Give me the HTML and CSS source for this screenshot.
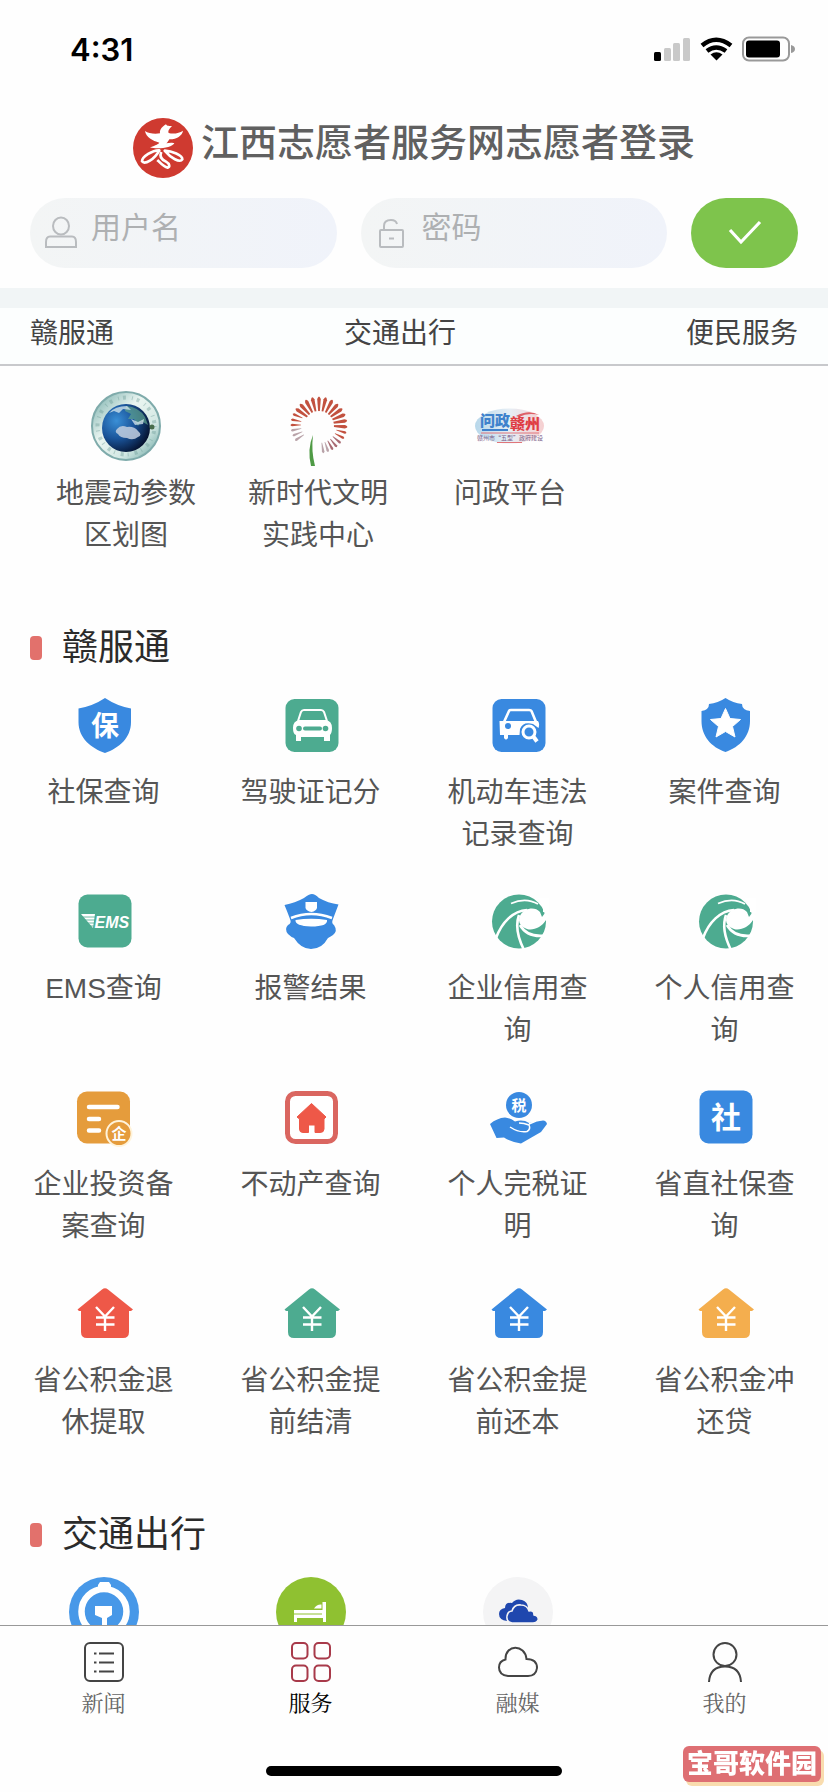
FILE: index.html
```html
<!DOCTYPE html>
<html lang="zh-CN">
<head>
<meta charset="utf-8">
<meta name="viewport" content="width=device-width, initial-scale=1">
<title>服务</title>
<link rel="stylesheet" href="styles.css">
</head>
<body>
<svg class="sprite" aria-hidden="true">
  <symbol id="house-yen" viewBox="0 0 70 70">
    <path fill="currentColor" d="M33 11.500Q36 9 39 11.500L64 31.500L62 33H60V54Q60 60 54 60H18Q12 60 12 54V33H10L8.500 31.500Z"/>
    <path fill="none" stroke="#fff" stroke-width="2.400" d="M27 29L36 38.500L45 29M27 39.500H45.500M27 46.500H45.500M36 38V53"/>
  </symbol>
  <symbol id="swirl" viewBox="0 0 70 70">
    <circle cx="36" cy="35.500" r="27" fill="#4dab90"/>
    <path fill="#fff" d="M38 28C42 22 52 20 57 26L59 31L62 27L66 30L63 34C59 41 50 45 44 43C36 40 34 34 38 28Z"/>
    <path fill="none" stroke="#fff" stroke-width="2.600" d="M44 24C30 25 19 36 13 52M36 29C32 40 35 52 41 64M37 39C42 48 52 51 63 49.500"/>
    <path fill="none" stroke="#fff" stroke-width="1.800" d="M28 17.500C38 13 48 14 55 18"/>
    <path fill="#fff" d="M54 12Q61 17 60 26L66 27V12Z"/>
  </symbol>
</svg>

<div class="app">
  <div class="status">
    <span class="clock">4:31</span>
    <svg class="signals" viewBox="0 0 142 28" aria-label="信号、无线网络和电量">
      <rect x="1" y="16" width="7" height="9" rx="1.500"/>
      <g fill="#c9c9c9"><rect x="11" y="12" width="7" height="13" rx="1.500"/><rect x="20" y="7" width="7" height="18" rx="1.500"/><rect x="30" y="2" width="7" height="23" rx="1.500"/></g>
      <g fill="none" stroke="#000" stroke-width="4.500"><path d="M49 9.500Q63-2 78 9.500"/><path d="M54 15Q63 8 73 15"/></g>
      <path d="M57.500 18.500Q63.500 14 69.500 18.500L63.500 24.500Z"/>
      <rect x="90" y="1.500" width="46" height="23" rx="6" fill="none" stroke="#999" stroke-width="2"/>
      <rect x="93" y="4.500" width="34" height="17" rx="3"/>
      <path fill="#999" d="M138 9Q142 10 142 13T138 17Z"/>
    </svg>
  </div>

  <header class="login">
    <h1 class="brand">
      <svg class="brand-logo" viewBox="39 54 180 180" aria-hidden="true">
        <circle cx="129" cy="144" r="90" fill="#cf3a30"/>
        <path fill="#fff" d="M75 93C85 101 106 103 120 100C118 88 128 79 138 73C142 80 148 77 156 79C146 88 144 93 146 99C162 103 178 99 189 92C187 107 168 119 148 118C146 122 143 127 139 130C148 128 160 128 163 130C157 143 112 149 90 142C99 139 115 133 118 128C98 122 78 113 75 93Z"/>
        <g fill="none" stroke="#fff" stroke-linejoin="round" stroke-width="8"><path d="M118 151C98 150 66 170 66 184C74 195 104 178 118 151Z"/><path d="M134 152C155 153 188 165 187 178C180 190 152 174 134 152Z"/><path d="M124 156C116 172 128 180 138 185C150 192 150 201 143 203C132 201 122 190 112 180"/></g>
      </svg>
      <span>江西志愿者服务网志愿者登录</span>
    </h1>
    <form class="login-form">
      <label class="field">
        <svg class="field-icon" viewBox="0 0 34 34" aria-hidden="true"><g fill="none" stroke="#b9bcbf" stroke-width="2"><ellipse cx="17" cy="10" rx="8" ry="8.500"/><path d="M6 20.500H28Q32 20.500 32 26V31H2V26Q2 20.500 6 20.500Z"/></g></svg>
        <input type="text" placeholder="用户名" aria-label="用户名">
      </label>
      <label class="field">
        <svg class="field-icon" viewBox="0 0 34 34" aria-hidden="true"><g fill="none" stroke="#b9bcbf" stroke-width="2"><rect x="5" y="14" width="23" height="17" rx="1"/><path d="M9 14V10Q9 4 16 4Q21 4 22 8M14 22.500H19"/></g></svg>
        <input type="password" placeholder="密码" aria-label="密码">
      </label>
      <button class="submit" type="submit" aria-label="登录"><svg viewBox="0 0 36 30" aria-hidden="true"><path fill="none" stroke="#fff" stroke-width="3.200" d="M3 12L14 24L33 4"/></svg></button>
    </form>
  </header>

  <nav class="anchors" aria-label="分类">
    <a href="#ganfutong">赣服通</a><a href="#traffic">交通出行</a><a href="#life">便民服务</a>
  </nav>

  <main class="content">
    <div class="grid grid-featured">
      <a class="item" href="#">
        <svg class="icon" viewBox="0 0 70 70" aria-hidden="true">
          <defs>
            <radialGradient id="sea" cx=".3" cy=".35" r=".75"><stop offset="0" stop-color="#3a8fd6"/><stop offset=".5" stop-color="#1a549a"/><stop offset="1" stop-color="#04102c"/></radialGradient>
            <linearGradient id="rim" x2="1" y2="1"><stop offset="0" stop-color="#6fa9a6"/><stop offset=".4" stop-color="#eaf5f1"/><stop offset=".7" stop-color="#d3e8e4"/><stop offset="1" stop-color="#5c9d99"/></linearGradient>
          </defs>
          <circle cx="35" cy="35" r="34" fill="url(#rim)" stroke="#7fabab" stroke-width="2"/>
          <circle cx="35" cy="35" r="28.500" fill="none" stroke="#6c9a95" stroke-width="4" stroke-dasharray="1 4 3 6" opacity=".4"/>
          <circle cx="35" cy="37" r="24" fill="url(#sea)"/>
          <path fill="#5fa38f" opacity=".7" d="M35 15Q48 16 54 26L57 34L50 30L47 35L43 28L37 28L40 23L34 20Z"/>
          <path fill="#d9e9ef" opacity=".75" d="M18 22Q24 15 36 15L40 19L32 18L28 22L23 20ZM40 28L47 31L53 28L52 33L44 34Z"/>
          <path fill="#c3cfdf" opacity=".85" d="M26 38Q30 33 36 36Q43 35 47 40Q52 44 47 46Q42 50 36 47Q29 47 27 43Q23 41 26 38Z"/>
          <circle cx="61" cy="36" r="2.500" fill="#486d4c"/>
        </svg>
        <span>地震动参数区划图</span>
      </a>
      <a class="item" href="#">
        <svg class="icon" viewBox="0 0 70 70" aria-hidden="true">
          <defs><path id="spoke" d="M-.4-8L-1.800-26Q0-31 1.800-26L.4-8Z"/><path id="seed" d="M-.3-18L-1.300-27Q0-30 1.300-27L.3-18Z"/></defs>
          <g transform="translate(36 34)" fill="#c2513f">
            <use href="#spoke"/><use href="#spoke" transform="rotate(14)"/><use href="#spoke" transform="rotate(28)"/><use href="#spoke" transform="rotate(42)"/><use href="#spoke" transform="rotate(55)"/><use href="#spoke" transform="rotate(68)"/><use href="#spoke" transform="rotate(81)"/><use href="#spoke" transform="rotate(94)"/><use href="#seed" transform="rotate(106)"/><use href="#seed" transform="rotate(118)"/>
            <use href="#spoke" transform="rotate(-14)"/><use href="#spoke" transform="rotate(-28)"/><use href="#spoke" transform="rotate(-42)"/><use href="#spoke" transform="rotate(-55)"/><use href="#seed" transform="rotate(-67)"/><use href="#seed" transform="rotate(-79)"/><use href="#seed" transform="rotate(-90)"/>
            <g fill="#a86a72"><use href="#seed" transform="rotate(130)"/><use href="#seed" transform="rotate(141)"/><use href="#seed" transform="rotate(151)"/></g>
            <g fill="#b9a3a9"><use href="#seed" transform="rotate(161)"/><use href="#seed" transform="rotate(171)"/><use href="#seed" transform="rotate(-101)"/><use href="#seed" transform="rotate(-112)"/><use href="#seed" transform="rotate(-123)"/></g>
          </g>
          <circle cx="36" cy="35" r="15" fill="#fefefe"/>
          <path fill="#4f9a45" d="M30 44Q24 58 28 75H32Q28 60 30 44Z"/>
        </svg>
        <span>新时代文明实践中心</span>
      </a>
      <a class="item" href="#">
        <svg class="icon" viewBox="0 0 70 70" aria-hidden="true">
          <defs><linearGradient id="oval"><stop offset="0" stop-color="#b7d7ea"/><stop offset=".5" stop-color="#e6eef5"/><stop offset="1" stop-color="#f6cfd0"/></linearGradient></defs>
          <ellipse cx="34.500" cy="35" rx="34.500" ry="17.500" fill="url(#oval)"/>
          <path fill="#dd6067" d="M41 25Q54 18 64 24Q53 21 44 26Z"/>
          <text x="5" y="35" font-size="15" font-weight="900" fill="#3f82cc">问政</text>
          <text x="35" y="38" font-size="15" font-weight="900" fill="#e03e45">赣州</text>
          <path stroke="#3f82cc" stroke-width="2" d="M7 39H33"/><path stroke="#e0757a" stroke-width="1" d="M6 42H64M22 51.500H47"/>
          <text x="35" y="49" font-size="6" text-anchor="middle" fill="#7b5d88">赣州市“五型”政府建设</text>
        </svg>
        <span>问政平台</span>
      </a>
    </div>

    <section id="ganfutong">
      <h2 class="heading">赣服通</h2>
      <div class="grid">
        <a class="item" href="#">
          <svg class="icon" viewBox="0 0 70 70" aria-hidden="true"><path fill="#3989e0" d="M36 8Q48 16 62 18.500V32C62 48 50 58 36 63C22 58 9.500 48 9.500 32V18.500Q24 16 36 8Z"/><text x="36" y="46" font-size="28" font-weight="700" text-anchor="middle" fill="#fff">保</text></svg>
          <span>社保查询</span>
        </a>
        <a class="item" href="#">
          <svg class="icon" viewBox="0 0 70 70" aria-hidden="true"><rect x="9.500" y="9" width="53" height="53" rx="9" fill="#4dab90"/><path fill="#fff" d="M23 30Q17 31 17 38Q17 44 20 45V51H25V47H48V51H54V45Q56 43 56 38Q56 31 50 30Z"/><path fill="none" stroke="#fff" stroke-width="2" d="M22 31L25 22Q26 20 28 20H45Q47 20 48 22L51 31"/><g fill="#4dab90"><circle cx="23" cy="38.500" r="2.800"/><circle cx="49.500" cy="38.500" r="2.800"/><rect x="27" y="36.500" width="19" height="4" rx="2"/></g></svg>
          <span>驾驶证记分</span>
        </a>
        <a class="item" href="#">
          <svg class="icon" viewBox="0 0 70 70" aria-hidden="true"><rect x="9.500" y="9" width="53" height="53" rx="9" fill="#3989e0"/><path fill="none" stroke="#fff" stroke-width="2.600" d="M21 32L26 21Q26.500 20 28 20H46Q48 20 48.500 21L53 32"/><path fill="#fff" d="M16.500 31H55Q57 34 55.500 38L50 34Q40 31 37 39L36.500 45H25V48Q23 51 21 48V45H17Z"/><circle cx="25" cy="36" r="3" fill="#3989e0"/><circle cx="46" cy="42" r="6" fill="none" stroke="#fff" stroke-width="3"/><path stroke="#fff" stroke-width="4" d="M50 46L54 51.500"/></svg>
          <span>机动车违法记录查询</span>
        </a>
        <a class="item" href="#">
          <svg class="icon" viewBox="0 0 70 70" aria-hidden="true"><path fill="#3989e0" d="M35.500 8Q43 13 52 14Q52 20 60 21V31C60 46 50 57 35.500 62C21 57 11.500 46 11.500 31V21Q19 20 19 14Q28 13 35.500 8Z"/><path fill="#fff" stroke="#fff" stroke-linejoin="round" d="M35.500 18.500L40 28.500L50.500 29.500L42.500 36.500L45 47L35.500 41.500L26 47L28.500 36.500L20.500 29.500L31 28.500Z"/></svg>
          <span>案件查询</span>
        </a>
        <a class="item" href="#">
          <svg class="icon" viewBox="0 0 70 70" aria-hidden="true"><rect x="9.500" y="8.500" width="53" height="53" rx="9" fill="#4dab90"/><path fill="#fff" d="M12 28H26L24 42Z"/><path stroke="#4dab90" stroke-width=".8" d="M12 31H26M14 34H26M17 37H26M20 40H26"/><text class="latin" x="25.500" y="42" font-size="16" font-style="italic" font-weight="700" fill="#fff">EMS</text></svg>
          <span>EMS查询</span>
        </a>
        <a class="item" href="#">
          <svg class="icon" viewBox="0 0 70 70" aria-hidden="true"><path fill="#3989e0" d="M36 8Q39 8 43 12Q52 17 62.500 18.500Q60 25 57 33Q55 37 58 39Q62 45 57 49Q54 51 52 52Q46 63 35 63Q25 63 18 52Q15 51 12 48Q8 43 12 39Q16 37 14 33Q11 25 8.500 19Q19 17 28 12Q33 8 36 8Z"/><path fill="#fff" d="M29.500 16H41V22Q40 25 35.500 26Q30.500 25 29.500 22Z"/><path fill="none" stroke="#fff" stroke-width="2.500" d="M15 32Q35 24 56 32"/><path fill="#fff" d="M19.500 34Q35 31.500 51 34Q52 40.500 35 40.500Q19 40 19.500 34Z"/></svg>
          <span>报警结果</span>
        </a>
        <a class="item" href="#"><svg class="icon" aria-hidden="true"><use href="#swirl"/></svg><span>企业信用查询</span></a>
        <a class="item" href="#"><svg class="icon" aria-hidden="true"><use href="#swirl"/></svg><span>个人信用查询</span></a>
        <a class="item" href="#">
          <svg class="icon" viewBox="0 0 70 70" aria-hidden="true"><rect x="8" y="9.500" width="53" height="52" rx="10" fill="#e59c3c"/><path stroke="#fff" stroke-width="4.500" stroke-linecap="round" d="M20 25H48.500M20 37H30M20 48.500H30"/><circle cx="50" cy="51.500" r="12.500" fill="#e59c3c" stroke="#fff3da" stroke-width="2"/><text x="50" y="57" font-size="15" font-weight="700" text-anchor="middle" fill="#fff">企</text></svg>
          <span>企业投资备案查询</span>
        </a>
        <a class="item" href="#">
          <svg class="icon" viewBox="0 0 70 70" aria-hidden="true"><rect x="11.500" y="11.500" width="48" height="48" rx="8" fill="#fff" stroke="#da6660" stroke-width="5"/><path fill="#ee5848" stroke="#ee5848" stroke-linejoin="round" d="M35.500 21.500L50 35L48 37V47Q48 50.500 44 50.500H39V43H32.500V50.500H27Q23.500 50.500 23.500 47V37L21 35Z"/></svg>
          <span>不动产查询</span>
        </a>
        <a class="item" href="#">
          <svg class="icon" viewBox="0 0 70 70" aria-hidden="true"><circle cx="36" cy="23" r="13" fill="#3989e0"/><text x="36" y="28.500" font-size="15" font-weight="700" text-anchor="middle" fill="#fff">税</text><path fill="#3989e0" d="M7 42Q14 36 22 35.500Q27 36 32 39.500Q40 37 46 41L57 39Q63 37 64 42L58 50L38 61.500Q28 60 21 55.500L13.500 56Z"/><path fill="none" stroke="#fff" stroke-width="1.500" d="M27 45Q36 51 44 49.500Q48 47 46 43Q41 41 36 41M46 42L53 39"/></svg>
          <span>个人完税证明</span>
        </a>
        <a class="item" href="#">
          <svg class="icon" viewBox="0 0 70 70" aria-hidden="true"><rect x="9.500" y="8.500" width="53" height="53" rx="9" fill="#3989e0"/><text x="36" y="46" font-size="30" font-weight="700" text-anchor="middle" fill="#fff">社</text></svg>
          <span>省直社保查询</span>
        </a>
        <a class="item" href="#"><svg class="icon red" aria-hidden="true"><use href="#house-yen"/></svg><span>省公积金退休提取</span></a>
        <a class="item" href="#"><svg class="icon green" aria-hidden="true"><use href="#house-yen"/></svg><span>省公积金提前结清</span></a>
        <a class="item" href="#"><svg class="icon blue" aria-hidden="true"><use href="#house-yen"/></svg><span>省公积金提前还本</span></a>
        <a class="item" href="#"><svg class="icon amber" aria-hidden="true"><use href="#house-yen"/></svg><span>省公积金冲还贷</span></a>
      </div>
    </section>

    <section id="traffic">
      <h2 class="heading">交通出行</h2>
      <div class="grid">
        <a class="item" href="#" aria-label="地铁"><svg class="icon" viewBox="0 0 70 70" aria-hidden="true"><circle cx="35" cy="35" r="35" fill="#4798e8"/><circle cx="35" cy="34.500" r="22.500" fill="none" stroke="#fff" stroke-width="6.500"/><path fill="#fff" d="M29 8L31 5H40L42 8V12H29ZM26 29H43V38L38 41V60H33V41L26 38Z"/></svg></a>
        <a class="item" href="#" aria-label="酒店"><svg class="icon" viewBox="0 0 70 70" aria-hidden="true"><circle cx="35" cy="35" r="35" fill="#8fc131"/><path fill="#fff" d="M46.500 25H50V45H47V41H21V45H18V33H46.500ZM38 31.500Q41 27 45.500 27.500V31.500Z"/><path stroke="#8fc131" stroke-width="1" d="M18 37H46"/></svg></a>
        <a class="item" href="#" aria-label="天气"><svg class="icon" viewBox="0 0 70 70" aria-hidden="true"><circle cx="35" cy="35" r="35" fill="#f4f4f5"/><g fill="#1f47ae"><path d="M24 44Q16 43 16 37Q16 32 22 31Q22 25 29 26Q33 21 39 23Q45 25 45 31V44Z"/><path stroke="#f4f4f5" stroke-width="1.500" d="M29 46Q23 45 24 39Q25 34 29 34Q31 27 38 28Q44 28 46 34Q51 33 51 38Q56 39 55 43Q54 46 50 46Z"/></g></svg></a>
      </div>
    </section>
  </main>

  <nav class="tabbar" aria-label="主导航">
    <a class="tab" href="#"><svg viewBox="0 0 40 40" aria-hidden="true"><rect x="1" y="1" width="38" height="38" rx="5"/><path d="M10 11.500H12.500M15 11.500H30M10 20.500H12.500M15 20.500H30M10 29.500H12.500M15 29.500H30"/></svg>新闻</a>
    <a class="tab tab-active" href="#" aria-current="page"><svg viewBox="0 0 40 40" aria-hidden="true"><rect x="1" y="1" width="15.500" height="15.500" rx="4"/><rect x="23.500" y="1" width="15.500" height="15.500" rx="4"/><rect x="1" y="23.500" width="15.500" height="15.500" rx="4"/><rect x="23.500" y="23.500" width="15.500" height="15.500" rx="4"/></svg>服务</a>
    <a class="tab" href="#"><svg viewBox="0 0 40 40" aria-hidden="true"><path d="M10 34Q1 33 1 25.500Q1 19 7.500 17.500C7 2 27 2 28.500 17Q39 17 39 26Q38 34 30 34Z"/></svg>融媒</a>
    <a class="tab" href="#"><svg viewBox="0 0 40 40" aria-hidden="true"><ellipse cx="20" cy="12.500" rx="11.500" ry="11.500"/><path d="M4 40Q5 24.500 20 24.500T36 40"/></svg>我的</a>
    <div class="home-bar"></div>
  </nav>
  <div class="badge">宝哥软件园</div>
</div>
</body>
</html>
```
FILE: styles.css
```css
* { box-sizing: border-box; }

body {
  margin: 0;
  background: #fefefe;
  color: #555;
  font-family: "Liberation Sans", "Noto Sans CJK SC", sans-serif;
  font-size: 28px;
  line-height: 42px;
}

a { color: inherit; text-decoration: none; }
svg { display: block; overflow: visible; }
svg text { font-family: "Noto Sans CJK SC", sans-serif; }
svg .latin { font-family: "Liberation Sans", sans-serif; }

.sprite { position: absolute; width: 0; height: 0; }

.app {
  display: flex;
  flex-direction: column;
  height: 100vh;
  overflow: hidden;
}

.status {
  display: flex;
  flex: none;
  align-items: center;
  justify-content: space-between;
  height: 100px;
  padding: 0 33px 0 70px;
}
.clock { color: #000; font-family: Inter, sans-serif; font-size: 31px; font-weight: 600; }
.signals { width: 142px; height: 28px; }

.login {
  flex: none;
  padding: 18px 30px 20px;
  border-bottom: 20px solid #f1f5f6;
}
.brand {
  display: flex;
  align-items: center;
  justify-content: center;
  gap: 8px;
  margin: 0 0 20px;
  color: #606060;
  font-size: 38px;
  font-weight: 500;
  line-height: 48px;
}
.brand span { margin-bottom: 10px; }
.brand-logo { width: 60px; height: 60px; }

.login-form { display: flex; gap: 24px; }
.field {
  display: flex;
  flex: 1;
  align-items: center;
  gap: 13px;
  min-width: 0;
  height: 70px;
  padding: 0 30px 0 14px;
  border-radius: 35px;
  background: linear-gradient(90deg, #f3f5f5, #f0f3fa);
}
.field-icon { flex: none; width: 34px; height: 34px; }
.field input {
  flex: 1;
  min-width: 0;
  height: 70px;
  padding: 0 0 10px;
  border: 0;
  outline: 0;
  background: none;
  color: #555;
  font: inherit;
  font-size: 30px;
}
.field input::placeholder { color: #aeb0b2; opacity: 1; }
.submit {
  display: flex;
  flex: none;
  align-items: center;
  justify-content: center;
  width: 107px;
  height: 70px;
  padding: 0;
  border: 0;
  border-radius: 35px;
  background: #7ec44c;
}
.submit svg { width: 36px; height: 30px; }

.anchors {
  display: flex;
  flex: none;
  justify-content: space-between;
  padding: 5px 30px 9px;
  border-bottom: 2px solid #c8c9cc;
  background: #fcfefe;
  color: #444;
}

.content {
  flex: 1;
  min-height: 0;
  padding-top: 25px;
  overflow-y: auto;
  scrollbar-width: none;
}
.grid {
  display: grid;
  grid-template-columns: repeat(4, 1fr);
  row-gap: 30px;
}
.grid-featured { padding: 0 30px; }
.item {
  display: flex;
  flex-direction: column;
  align-items: center;
  gap: 12px;
  text-align: center;
}
.item span { width: 144px; }
.icon { width: 70px; height: 70px; }
.red { color: #ee5848; }
.green { color: #4dab90; }
.blue { color: #3989e0; }
.amber { color: #f4ae4e; }

.heading {
  display: flex;
  align-items: center;
  gap: 20px;
  margin: 70px 30px 21px;
  color: #2b2b2b;
  font-size: 36px;
  font-weight: 400;
}
.heading::before {
  width: 12px;
  height: 24px;
  border-radius: 4px;
  background: #e2716c;
  content: "";
}

.tabbar {
  display: grid;
  flex: none;
  grid-template-columns: repeat(4, 1fr);
  row-gap: 48px;
  padding: 16px 0;
  border-top: 1px solid #999;
  background: #fefefe;
}
.tab {
  display: flex;
  flex-direction: column;
  align-items: center;
  gap: 4px;
  color: #666;
  font-family: "Noto Serif CJK SC", "Noto Sans CJK SC", serif;
  font-size: 22px;
  line-height: 32px;
}
.tab svg { width: 40px; height: 40px; fill: none; stroke: #444; stroke-width: 2; }
.tab-active { color: #000; }
.tab-active svg { stroke: #a83a4a; }
.home-bar {
  grid-column: 1 / -1;
  justify-self: center;
  width: 296px;
  height: 10px;
  border-radius: 5px;
  background: #000;
}

.badge {
  position: fixed;
  right: 7px;
  bottom: 10px;
  padding: 0 4px;
  border-radius: 6px;
  background: #de6f73;
  box-shadow: 3px 4px 0 #f9dcae;
  color: #fff;
  font-size: 26px;
  font-weight: 900;
  line-height: 36px;
}
```
